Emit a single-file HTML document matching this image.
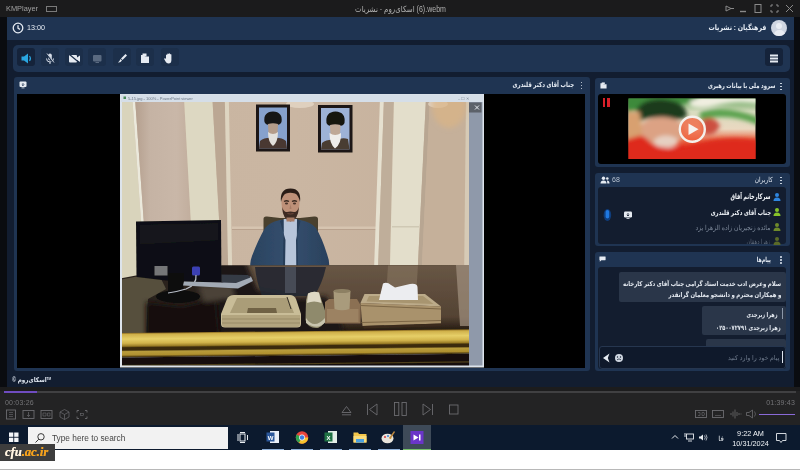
<!DOCTYPE html>
<html><head><meta charset="utf-8">
<style>
*{margin:0;padding:0;box-sizing:border-box}
html,body{width:800px;height:470px;overflow:hidden;background:#fff;font-family:"Liberation Sans","DejaVu Sans",sans-serif;}
.abs{position:absolute}
#root{position:relative;width:800px;height:470px;overflow:hidden;background:#fff}
#titlebar{left:0;top:0;width:800px;height:17px;background:#1b1b1c}
#app{left:0;top:17px;width:800px;height:370px;background:#0a0c10}
#appin{left:7px;top:0;width:787px;height:370px;background:#121d30}
#hdr{left:0;top:0;width:787px;height:23px;background:#1f3452}
#tool{left:6px;top:28px;width:777px;height:27px;background:#1f3452;border-radius:5px}
.panel{background:#1f3452;border-radius:3px}
.pt{transform-origin:right center;color:#e6ecf4;font-size:7px;font-weight:bold;direction:rtl;white-space:nowrap;text-align:right;line-height:10px}
.tb{width:18px;height:18px;border-radius:3px;background:#1c2f4a;top:3.200px}
.keb{width:2px;height:8px}
.keb i{position:absolute;left:0;width:1.800px;height:1.800px;border-radius:50%;background:#dfe6f0}
#ctrl{left:0;top:387px;width:800px;height:38px;background:#232324}
#task{left:0;top:425px;width:800px;height:25px;background:#0c1a2e}
#search{left:28px;top:427px;width:200px;height:22px;background:#f2f2f2;color:#454545;font-size:8.300px}
#cfu{left:0;top:444px;width:55px;height:16.500px;background:#3d3d3d}
.u{transform-origin:right center;direction:rtl;white-space:nowrap;text-align:right;font-size:7px;line-height:10px}
.msg{background:#2a3649;border-radius:2px}
.mt{transform-origin:right center;direction:rtl;white-space:nowrap;text-align:right;font-size:6.6px;line-height:9px;color:#e4e9f0;font-weight:bold}
</style></head><body>
<svg width="0" height="0" style="position:absolute"><defs><filter id="gblur" x="0" y="0" width="100%" height="100%" color-interpolation-filters="sRGB"><feGaussianBlur stdDeviation="0.550" edgeMode="duplicate"/></filter></defs></svg>
<div id="root" style="filter:url(#gblur)">
 <div id="titlebar" class="abs">
  <span id="t_km" class="abs" style="left:5.500px;top:3px;font-size:8px;color:#a0a0a0;line-height:11px;transform-origin:left center;transform:scaleX(0.923)">KMPlayer</span>
  <span class="abs" style="left:46px;top:5.5px;width:11px;height:6px;border:1px solid #7a7a7a"></span>
  <span id="t_title" class="abs" style="left:354.500px;top:4px;font-size:8.500px;color:#b0b0b0;white-space:nowrap;line-height:11px;direction:ltr;transform-origin:left center;transform:scaleX(0.828)">اسکای‌روم - نشریات &lrm;(6).webm</span>
  <svg class="abs" style="left:720px;top:0" width="80" height="17" viewBox="720 0 80 17" fill="none" stroke="#8a8a8a" stroke-width="1">
   <path d="M726 6 L731 8.5 L726 11 Z M731 8.5 H734"/>
   <path d="M740 11.5 H746" stroke-width="1.4"/>
   <rect x="755" y="4.5" width="6" height="8"/>
   <path d="M771 7 V5 H773 M776 5 H778 V7 M778 10 V12 H776 M773 12 H771 V10"/>
   <path d="M786 5 L793 12 M793 5 L786 12"/>
  </svg>
 </div>
 <div id="app" class="abs">
  <div id="appin" class="abs">
   <div id="hdr" class="abs">
    <svg class="abs" style="left:5px;top:5px" width="12" height="12" viewBox="0 0 12 12" fill="none" stroke="#e6ecf4" stroke-width="1.3"><circle cx="6" cy="6" r="4.8"/><path d="M6 3.2 V6.2 L8 7.4"/></svg>
    <span id="t_1300" class="abs" style="left:20px;top:6px;font-size:7.500px;color:#e6ecf4;line-height:10px;transform-origin:left center;transform:scaleX(0.958)">13:00</span>
    <div class="abs" style="left:764px;top:3px;width:16px;height:16px;border-radius:50%;background:#cfd6e2;overflow:hidden">
      <div class="abs" style="left:5px;top:3px;width:6px;height:6px;border-radius:50%;background:#e9edf3"></div>
      <div class="abs" style="left:2.5px;top:10px;width:11px;height:8px;border-radius:5px 5px 0 0;background:#e9edf3"></div>
    </div>
    <span id="t_hdr" class="abs pt" style="right:28px;top:6px;font-size:7.500px;transform:scaleX(0.835)">فرهنگیان : نشریات</span>
   </div>
   <div id="tool" class="abs">
    <div class="abs tb" style="left:4px;background:#15233a"></div>
    <div class="abs tb" style="left:28px"></div>
    <div class="abs tb" style="left:52px"></div>
    <div class="abs tb" style="left:75px"></div>
    <div class="abs tb" style="left:100px"></div>
    <div class="abs tb" style="left:123px"></div>
    <div class="abs tb" style="left:148px"></div>
    <div class="abs tb" style="left:752px;background:#15233a"></div>
    <svg class="abs" style="left:0;top:0" width="777" height="27" viewBox="0 0 777 27">
     <!-- speaker -->
     <path d="M8.5 11.5 H11 L15 8.5 V18.5 L11 15.5 H8.5Z" fill="#2aa6e0"/>
     <path d="M16.5 11 Q18.5 13.5 16.5 16" fill="none" stroke="#2aa6e0" stroke-width="1.1"/>
     <!-- mic -->
     <rect x="35.2" y="8.5" width="3.6" height="7" rx="1.8" fill="#d4dbe6"/>
     <path d="M33.5 13.5 Q33.5 17 37 17 Q40.500 17 40.500 13.500 M37 17 V19" fill="none" stroke="#d4dbe6" stroke-width="1"/>
     <path d="M33.500 9 L40.500 18" stroke="#1c2f4a" stroke-width="1.6"/><path d="M34 8.500 L41 17.500" stroke="#d4dbe6" stroke-width="0.9"/>
     <!-- cam -->
     <rect x="56" y="10" width="8" height="7.500" rx="1" fill="#e6ebf2"/><path d="M64 12.500 L67 10.500 V17 L64 15Z" fill="#e6ebf2"/>
     <path d="M56.500 9.500 L66 17.500" stroke="#1c2f4a" stroke-width="1.2"/>
     <!-- screen dim -->
     <rect x="80" y="10" width="8.500" height="6.500" rx="1" fill="#5a6a80"/><rect x="82.500" y="17" width="3.500" height="1" fill="#5a6a80"/>
     <!-- brush -->
     <path d="M112.500 9 L114 10.500 L109.500 15 L108 13.500Z" fill="#e6ebf2"/><path d="M107.500 14 L109 15.500 Q107.500 18 105 17.500 Q106.500 16.500 107.500 14Z" fill="#e6ebf2"/>
     <!-- folder -->
     <path d="M128 10 H131 L132 11.500 H136 V18 H128Z" fill="#e6ebf2"/><rect x="129.500" y="8.500" width="4" height="3" fill="#e6ebf2"/>
     <!-- hand -->
     <path d="M153 13 V10 Q153.600 9.200 154.200 10 V9 Q154.900 8.200 155.600 9 V8.700 Q156.300 7.900 157 8.700 V9.400 Q157.700 8.800 158.400 9.500 V15 Q158.400 18.500 155.500 18.500 Q153.500 18.500 152.500 16.500 L151 13.800 Q151.800 12.800 153 13.800Z" fill="#e6ebf2"/>
     <!-- hamburger -->
     <path d="M757 10.500 H765 M757 13.500 H765 M757 16.500 H765" stroke="#e6ebf2" stroke-width="1.800"/>
    </svg>
   </div>
   <!-- main panel -->
   <div class="abs panel" style="left:7px;top:60px;width:576px;height:294px">
     <div class="abs" style="left:3px;top:17px;width:568px;height:274px;background:#000"></div>
     <div id="t_main" class="abs pt" style="right:15.500px;top:3px;transform:scaleX(0.778)">جناب آقای دکتر قلندری</div>
     <div class="abs keb" style="left:566.5px;top:4.5px"><i style="top:0"></i><i style="top:3px"></i><i style="top:6px"></i></div>
     <svg class="abs" style="left:5px;top:4px" width="8" height="8" viewBox="0 0 8 8"><rect x="0.500" y="0.500" width="7" height="5.500" rx="1" fill="#e6ebf2"/><path d="M4 2 V4.500 M2.800 3.500 L4 4.700 L5.200 3.500" stroke="#1f3452" stroke-width="0.800" fill="none"/><rect x="2.500" y="6.500" width="3" height="0.800" fill="#e6ebf2"/></svg>
   </div>
   <span id="t_foot" class="abs" style="left:5px;top:357.500px;transform-origin:left center;font-size:6.500px;color:#dfe6f0;font-weight:bold;white-space:nowrap;line-height:9px;transform:scaleX(0.866)">© اسکای‌روم<sup style="font-size:3.500px;vertical-align:top">TM</sup></span>
   <!-- right panel 1 -->
   <div class="abs panel" style="left:587.500px;top:61px;width:195px;height:89px"></div>
   <div class="abs" style="left:590px;top:61px;width:191px;height:88px">
     <div class="abs" style="left:0.500px;top:16px;width:188.500px;height:70px;background:#000;border-radius:3px"></div>
     <div id="t_p1" class="abs pt" style="right:13px;top:3px;transform:scaleX(0.755)">سرود ملی با بیانات رهبری</div>
     <div class="abs keb" style="left:183px;top:4.500px"><i style="top:0"></i><i style="top:3px"></i><i style="top:6px"></i></div>
     <svg class="abs" style="left:2.500px;top:4px" width="7" height="7" viewBox="0 0 8 8"><path d="M0.500 1.500 H3 L4 2.500 H7.500 V7.500 H0.500Z" fill="#e6ebf2"/><rect x="2" y="0.500" width="3.500" height="2" fill="#e6ebf2"/></svg>
     <div class="abs" style="left:5.500px;top:20px;width:2.800px;height:8.500px;background:#d8202a"></div>
     <div class="abs" style="left:10.200px;top:20px;width:2.800px;height:8.500px;background:#d8202a"></div>
   </div>
   <!-- users panel -->
   <div class="abs panel" style="left:587.500px;top:156px;width:195px;height:73px"></div>
   <div class="abs" style="left:590px;top:156px;width:191px;height:73px">
     <div class="abs" style="left:0.500px;top:14px;width:188.500px;height:57px;background:#131d2f;border-radius:3px"></div>
     <div id="t_users" class="abs pt" style="right:15.500px;top:2px;font-weight:normal;transform:scaleX(0.828)">کاربران</div>
     <div class="abs keb" style="left:183px;top:3.500px"><i style="top:0"></i><i style="top:3px"></i><i style="top:6px"></i></div>
     <svg class="abs" style="left:3px;top:3px" width="10" height="8" viewBox="0 0 10 8" fill="#e6ebf2"><circle cx="3.500" cy="2.200" r="1.700"/><path d="M0.500 7.500 Q0.500 4.500 3.500 4.500 Q6.500 4.500 6.500 7.500Z"/><circle cx="7.300" cy="2.500" r="1.300"/><path d="M7 4.500 Q9.500 4.500 9.500 7.500 H7.300Z"/></svg>
     <span class="abs" style="left:15px;top:2px;font-size:7px;color:#b8c2d0;line-height:10px">68</span>
     <!-- rows -->
     <div id="t_u1" class="abs u" style="right:17.400px;top:19px;color:#f2f5f9;font-weight:bold;font-size:7.500px;transform:scaleX(0.672)">سرکارخانم آفاق</div>
     <div id="t_u2" class="abs u" style="right:17.400px;top:34.500px;color:#eef2f7;font-weight:bold;transform:scaleX(0.764)">جناب آقای دکتر قلندری</div>
     <div id="t_u3" class="abs u" style="right:17.400px;top:49.500px;color:#7f8b9c;transform:scaleX(0.867)">مائده زنجیریان زاده الزهرا یزد</div>
     <div id="t_u4" class="abs u" style="right:17.400px;top:64px;color:#5f6b7c;height:7px;overflow:hidden;transform:scaleX(0.740)">زهرا دهقان</div>
     <svg class="abs" style="left:0;top:0" width="191" height="73" viewBox="0 0 191 73">
      <g fill="#2f86e0"><circle cx="180" cy="22" r="2"/><path d="M176.500 28 Q176.500 24.500 180 24.500 Q183.500 24.500 183.500 28Z"/></g>
      <g fill="#86c22a"><circle cx="180" cy="37" r="2"/><path d="M176.500 43 Q176.500 39.500 180 39.500 Q183.500 39.500 183.500 43Z"/></g>
      <g fill="#6f8a2a"><circle cx="180" cy="52" r="2"/><path d="M176.500 58 Q176.500 54.500 180 54.500 Q183.500 54.500 183.500 58Z"/></g>
      <g fill="#5a6a28"><circle cx="180" cy="66" r="2"/><path d="M176.500 72 Q176.500 68.500 180 68.500 Q183.500 68.500 183.500 72Z"/></g>
      <ellipse cx="10.400" cy="42" rx="3.800" ry="6" fill="#0f3d7c"/><rect x="8.600" y="37" width="3.600" height="8.500" rx="1.800" fill="#1f78e0"/>
      <rect x="27" y="38.500" width="8" height="6" rx="1.200" fill="#e6ebf2"/><rect x="29.500" y="45" width="3" height="0.800" fill="#e6ebf2"/><path d="M31 40 V43 M29.800 41.800 L31 43 L32.200 41.800" stroke="#131c2d" stroke-width="0.800" fill="none"/>
     </svg>
   </div>
   <!-- messages panel -->
   <div class="abs panel" style="left:587.500px;top:235px;width:195px;height:119px"></div>
   <div class="abs" style="left:590px;top:235px;width:191px;height:119px">
     <div class="abs" style="left:0.500px;top:15px;width:188.500px;height:102px;background:#131d2f;border-radius:3px"></div>
     <div class="abs" style="left:2px;top:15px;width:187px;height:102px;overflow:hidden">
       <div class="abs msg" style="left:20px;top:5px;width:167px;height:30px"></div>
       <div class="abs msg" style="left:103px;top:39px;width:84px;height:29px"></div>
       <div class="abs msg" style="left:107px;top:72px;width:80px;height:10px"></div>
       <div class="abs" style="left:0;top:79px;width:187px;height:23px;background:#0f192b;border:1px solid #26364f;border-radius:3px"></div>
       <div id="t_m1" class="abs mt" style="right:5px;top:12px;transform:scaleX(0.814)">سلام وعرض ادب خدمت استاد گرامی جناب آقای دکتر کارخانه</div>
       <div id="t_m2" class="abs mt" style="right:5px;top:22.500px;transform:scaleX(0.816)">و همکاران محترم و دانشجو معلمان گرانقدر</div>
       <div class="abs" style="left:183px;top:41px;width:1.200px;height:11px;background:#8a96a8"></div>
       <div id="t_m3" class="abs mt" style="right:8px;top:43px;transform:scaleX(0.746)">زهرا زبرجدی</div>
       <div id="t_m4" class="abs mt" style="right:5px;top:56px;transform:scaleX(0.772)">زهرا زبرجدی ۰۲۵۰۰۷۲۷۹۱</div>
       <div id="t_ph" class="abs mt" style="right:7px;top:86px;font-weight:normal;color:#6f7b8d;transform:scaleX(0.947)">پیام خود را وارد کنید</div>
       <div class="abs" style="left:182.500px;top:84px;width:1px;height:12px;background:#dfe6f0"></div>
       <svg class="abs" style="left:2px;top:85px" width="24" height="12" viewBox="0 0 24 12"><path d="M8.500 1.500 L2 6 L8.500 10.500 L6.800 6Z" fill="#e6ebf2"/><circle cx="18" cy="6" r="4" fill="#cfd6e0"/><circle cx="16.500" cy="5" r="0.700" fill="#111c2f"/><circle cx="19.500" cy="5" r="0.700" fill="#111c2f"/><path d="M16 7.800 Q18 6 20 7.800" stroke="#111c2f" stroke-width="0.700" fill="none"/></svg>
     </div>
     <div id="t_msgs" class="abs pt" style="right:17px;top:2.500px;transform:scaleX(0.675)">پیام‌ها</div>
     <div class="abs keb" style="left:183px;top:4px"><i style="top:0"></i><i style="top:3px"></i><i style="top:6px"></i></div>
     <svg class="abs" style="left:2.400px;top:4px" width="7" height="6.200" viewBox="0 0 9 8"><path d="M1 0.500 H8 Q8.500 0.500 8.500 1 V5 Q8.500 5.500 8 5.500 H3 L1 7.500 V5.500 Q0.500 5.500 0.500 5 V1 Q0.500 0.500 1 0.500Z" fill="#e6ebf2"/></svg>
   </div>
  </div>
 </div>
<svg class="abs" style="left:0;top:0" width="800" height="470" viewBox="0 0 800 470">
 <defs>
  <filter id="bl" x="-5%" y="-5%" width="110%" height="110%"><feGaussianBlur stdDeviation="0.6"/></filter>
  <filter id="bl2" x="-20%" y="-20%" width="140%" height="140%"><feGaussianBlur stdDeviation="2.500"/></filter>
  <linearGradient id="gold" x1="0" y1="0" x2="0" y2="1">
   <stop offset="0" stop-color="#8a6a20"/><stop offset="0.060" stop-color="#cfb04a"/><stop offset="0.250" stop-color="#e6cf68"/>
   <stop offset="0.420" stop-color="#d2b44c"/><stop offset="0.540" stop-color="#9a7c26"/><stop offset="0.600" stop-color="#3a2a0c"/><stop offset="0.700" stop-color="#3a2a0c"/>
   <stop offset="0.760" stop-color="#b89c3c"/><stop offset="0.900" stop-color="#b0902f"/><stop offset="1" stop-color="#2a1c08"/>
  </linearGradient>
  <linearGradient id="wallL" x1="0" y1="0" x2="1" y2="0">
   <stop offset="0" stop-color="#b49f8e"/><stop offset="0.250" stop-color="#c5b3a4"/><stop offset="0.700" stop-color="#c9b7a8"/><stop offset="1" stop-color="#c0ac9b"/>
  </linearGradient>
  <linearGradient id="wallC" x1="0" y1="0" x2="1" y2="0">
   <stop offset="0" stop-color="#c9b5a1"/><stop offset="0.500" stop-color="#cab6a2"/><stop offset="1" stop-color="#c6b19c"/>
  </linearGradient>
  <linearGradient id="deskR" x1="0" y1="0" x2="0" y2="1">
   <stop offset="0" stop-color="#685645"/><stop offset="0.750" stop-color="#544333"/><stop offset="0.920" stop-color="#2c2016"/><stop offset="1" stop-color="#20160e"/>
  </linearGradient>
  <linearGradient id="deskFade" x1="0" y1="0" x2="1" y2="0">
   <stop offset="0" stop-color="#1d1713" stop-opacity="1"/><stop offset="1" stop-color="#1d1713" stop-opacity="0"/>
  </linearGradient>
  <linearGradient id="suit" x1="0" y1="0" x2="1" y2="0">
   <stop offset="0" stop-color="#2a425f"/><stop offset="0.500" stop-color="#34506f"/><stop offset="1" stop-color="#2a405c"/>
  </linearGradient>
  <clipPath id="dc"><polygon points="118,279 136,275.500 222,265.500 473,265 473,336 118,338"/></clipPath>
  <clipPath id="pc"><rect x="122" y="102" width="347" height="263.500"/></clipPath>
 </defs>
 <!-- window chrome -->
 <rect x="120" y="94" width="364" height="273.500" fill="#dde4ec"/>
 <rect x="121" y="94.500" width="362" height="7.500" fill="#d5dee8"/>
 <rect x="123.500" y="96.500" width="2.500" height="2.500" fill="#4a8a5a"/>
 <text x="128" y="100" font-size="4" fill="#6a7684" font-family="Liberation Sans, sans-serif">5-15.jpg - ‪100%‬ - PowerPoint viewer</text>
 <text x="458" y="100" font-size="4" fill="#7a8694" font-family="Liberation Sans, sans-serif">– ☐ ✕</text>
 <rect x="469" y="102" width="13.500" height="263.500" fill="#8f99aa"/>
 <rect x="469" y="102.500" width="12.500" height="10" fill="#5c6169"/>
 <path d="M475 105.500 L479 109.500 M479 105.500 L475 109.500" stroke="#e8ecf0" stroke-width="1"/>
 <g clip-path="url(#pc)">
 <g filter="url(#bl)">
  <!-- wall -->
  <rect x="118" y="98" width="355" height="180" fill="url(#wallC)"/>
  <polygon points="118,98 132.300,98 145.600,285 118,285" fill="#d9d4bc"/>
  <polygon points="132.300,98 135,98 148.300,285 145.600,285" fill="#ebe9dc"/>
  <polygon points="135,98 184,98 194.300,285 148.300,285" fill="url(#wallL)"/>
  <polygon points="184,98 212.400,98 222.700,285 194.300,285" fill="#ddd8c2"/>
  <polygon points="212.400,98 224.800,98 228.500,285 222.700,285" fill="#bba793"/>
  <polygon points="224.800,98 228.800,98 232.500,285 228.500,285" fill="#ded5c1"/>
  <rect x="232" y="226.500" width="146" height="2.500" fill="#d6c4b0"/>
  <rect x="232" y="229" width="146" height="1" fill="#b9a28e"/>
  <!-- right column -->
  <polygon points="380,98 384,98 377.500,285 373.500,285" fill="#e6e1d0"/>
  <polygon points="384,98 394,98 389.500,285 377.500,285" fill="#bfae9a"/>
  <polygon points="394,98 426,98 417,285 389.500,285" fill="#e3decb"/>
  <polygon points="426,98 430,98 421,285 417,285" fill="#b8a692"/>
  <polygon points="430,98 473,98 473,285 421,285" fill="#c5b09a"/>
  <polygon points="466,98 473,98 473,285 464,285" fill="#d6cab6"/>
  <rect x="392" y="226" width="27" height="1.500" fill="#cfc8b4"/>
  <ellipse cx="300" cy="104" rx="14" ry="4" fill="#e8dccb" opacity="0.700"/>
  <ellipse cx="438" cy="104" rx="10" ry="4" fill="#e8dccb" opacity="0.700"/>
  <g filter="url(#bl2)"><ellipse cx="449" cy="106" rx="17" ry="22" fill="#dcb484" opacity="0.650"/></g>
  <!-- portraits -->
  <rect x="256" y="104.500" width="34" height="47" fill="#1a1612"/>
  <rect x="259" y="107.500" width="28" height="41" fill="#86a1cd"/>
  <path d="M259 148.500 L260 141 Q265 137 273 138 Q281 137 286 141 L287 148.500Z" fill="#4a3830"/>
  <path d="M264.500 122 Q263 112 273 111.500 Q283 112 281.500 122 Q280 126 273 124.500 Q266 126 264.500 122Z" fill="#191715"/>
  <path d="M268 124 Q273 122.500 278 124 L277.500 134 Q273 139 268.500 134Z" fill="#b49c8a"/>
  <path d="M268 132 Q273 136 278 132 Q278 142 273 146 Q268 142 268 132Z" fill="#e2e0dc"/>
  <rect x="318" y="105" width="34.500" height="47.500" fill="#1a1612"/>
  <rect x="321" y="108" width="28.500" height="41.500" fill="#9db2d6"/>
  <path d="M321 149.500 L322 143 Q327 139 335 140 Q343 137 348 139 L349.500 149.500Z" fill="#4a3c30"/>
  <path d="M326.500 123 Q325 112 335.500 111.500 Q346 112 344.500 123 Q343 127 335.500 125.500 Q328 127 326.500 123Z" fill="#141210"/>
  <path d="M330 125 Q335 123.500 340.500 125 L340 135 Q335 140 330.500 135Z" fill="#bfa896"/>
  <path d="M329.500 133 Q335 137 341 133 Q341.500 144 335 148.500 Q329.500 144 329.500 133Z" fill="#efedea"/>
  <!-- chair -->
  <path d="M263.500 268 V219 Q263.500 216 267 216.500 L280 218 H300 L314 216.500 Q318 216 318 219 V268Z" fill="#4a402e"/>
  <!-- suit -->
  <path d="M280 220 Q270 222 265 228 Q258 240 252 256 Q249 264 251 268 H329 Q330 262 327 254 Q322 238 316 228 Q311 222 300 220Z" fill="url(#suit)"/>
  <polygon points="283.500,219 297,219 296.500,268 284.500,268" fill="#b7c5da"/>
  <path d="M283.500 219 L280 221 L285.500 240 L285 268 L283 268Z" fill="#263c58"/>
  <path d="M297 219 L300.500 221 L296 240 L296.500 268 L298 268Z" fill="#263c58"/>
  <!-- head -->
  <path d="M281.500 203 Q281 190 290.500 190 Q300 190 299.500 203 Q299 214 295 218.500 Q290.500 222 286 218.500 Q282 214 281.500 203Z" fill="#bd9078"/>
  <path d="M281 202 Q279.500 188.500 290.500 188.500 Q301.500 188.500 300 202 Q298.500 195 295 193.500 Q290 192 286 193.500 Q282.500 195 281 202Z" fill="#2a1f19"/>
  <path d="M282 207 Q283 220 290.500 221.500 Q298 220 299 207 Q297 212.500 294 212 Q290.500 211 287 212 Q284 212.500 282 207Z" fill="#3c2c24"/>
  <rect x="286.500" y="217.500" width="8" height="4" fill="#a87c66"/>
  <path d="M284 201.500 Q286.500 200 289 201.500 M292 201.500 Q294.500 200 297 201.500" stroke="#3a2a22" stroke-width="1.300" fill="none"/>
  <ellipse cx="286.500" cy="203.500" rx="1.600" ry="0.900" fill="#4a342a"/><ellipse cx="294.500" cy="203.500" rx="1.600" ry="0.900" fill="#4a342a"/>
  <path d="M290.500 204 L289.500 209 H291.500Z" fill="#a67c66"/>
  <path d="M287.500 213.500 Q290.500 214.500 293.500 213.500" stroke="#7a4a40" stroke-width="0.800" fill="none"/>
  <!-- desk -->
  <polygon points="118,279 136,275.500 222,265.500 473,265 473,336 118,338" fill="#2a231d"/>
  <polygon points="232,265.500 473,265 473,334 232,334" fill="url(#deskR)"/>
  <g clip-path="url(#dc)"><g filter="url(#bl2)"><polygon points="215,255 243,255 258,290 300,298 326,296 340,318 346,345 215,345" fill="#1f1915"/></g></g>
  <polygon points="388,265.500 418,265.500 414,326 384,326" fill="#8a7862" opacity="0.550"/>
  <polygon points="456,265 473,265 473,326 460,326" fill="#a39280" opacity="0.700"/>
  <polygon points="118,280 158,272.500 166,289 148,299 146,338 118,338" fill="#58523f" opacity="0.950"/>
  <g clip-path="url(#dc)"><g filter="url(#bl2)"><polygon points="146,302 182,306 216,298 219,336 146,338" fill="#120f0c"/><polygon points="198,286 232,284 236,298 204,302" fill="#4c4238"/></g></g>
  <path d="M255 267 H326 Q322 285 314 296 H262 Q256 280 255 267Z" fill="#242831" opacity="0.900"/>
  <rect x="285" y="267" width="11" height="26" fill="#5a6270" opacity="0.600"/>
  <!-- monitor -->
  <polygon points="136,221.500 221,220 221.500,282.500 170,281 136.500,277" fill="#101113"/>
  <polygon points="140,225 218,223.500 218,240 140,244" fill="#17181b"/>
  <rect x="154.500" y="266" width="13" height="9.500" fill="#8e9092" opacity="0.800"/>
  <rect x="192" y="266.500" width="8" height="9" rx="1.500" fill="#3a40b4"/>
  <rect x="168" y="273" width="15.500" height="20" fill="#0d0d0f"/>
  <ellipse cx="178" cy="296.500" rx="22" ry="6.500" fill="#0b0b0c"/>
  <path d="M196 275 Q197 285 186 289 Q176 292 168 293" fill="none" stroke="#b9bec8" stroke-width="1.200"/>
  <!-- keyboard -->
  <polygon points="184,281.500 221.500,282.500 251,276.500 253,281 238,288.500 183,285.500" fill="#a2aab5"/>
  <polygon points="221.500,274.500 248,275 250.500,277.500 236,283 221.500,282.500" fill="#353a45"/>
  <!-- tray -->
  <path d="M234 295 H290 Q294 295 296 299 L301 314 V324 Q301 327.500 297 327.500 H225 Q221 327.500 221 324 V314 L227 299 Q229 295 234 295Z" fill="#c9bd98"/>
  <path d="M222 315 H300 V324 Q300 327 297 327 H225 Q222 327 222 324Z" fill="#b3a57f"/>
  <path d="M222 319 H300 M222 323 H300" stroke="#8f8260" stroke-width="0.700"/>
  <path d="M237 298 H288 L294 313 H230Z" fill="#aa9d78"/>
  <polygon points="248,308 276,308 277,313 247,313" fill="#6f6244"/>
  <path d="M287 297 L291 309" stroke="#3a342a" stroke-width="1"/>
  <!-- boat -->
  <path d="M308 293.500 Q313 290.500 319 292.500 L325.500 312 Q327 324 318 328 Q308 329 305.500 320 L306 300Z" fill="#8f8a6c"/>
  <path d="M308 293.500 Q313 290.500 319 292.500 L321.500 303 Q314 300 307 303Z" fill="#ded8c4"/>
  <path d="M306 318 Q314 330 325 318 L325.500 322 Q318 331 306 323Z" fill="#c8c4ae"/>
  <!-- pen holder -->
  <polygon points="325,302 329,299 357,299 360.500,305 360.500,323.500 325,323.500" fill="#8b6f52"/>
  <polygon points="327,309 358.500,309 358.500,322 327,322" fill="#9c8262"/>
  <path d="M333.500 291 Q342 288 350.500 291 L349.500 309 Q342 311.500 334.500 309Z" fill="#a99b7c"/>
  <ellipse cx="342" cy="291" rx="8.500" ry="2" fill="#8d8064"/>
  <!-- tissue box -->
  <polygon points="364.500,294 425,294 441,306.500 360.500,303" fill="#bcab8a"/>
  <polygon points="369,296 423,296 433.500,304 366.500,301.500" fill="#a8956f"/>
  <polygon points="360.500,303 441,306.500 441,323.500 362.500,326" fill="#a9926c"/>
  <path d="M360.500 305.500 L441 309 M361.500 322.500 L441 320.500" stroke="#7c6646" stroke-width="1"/>
  <polygon points="362.500,326 441,323.500 441,326 364,328.500" fill="#3a2c1e"/>
  <path d="M379 300 L383 283.500 Q387 281.500 391 285 L395 287.500 L410 284 Q417 283 417.500 287 L418 300Z" fill="#ecedf0"/>
  <!-- gold band -->
  <g transform="rotate(-0.600 122 333)">
   <rect x="116" y="333" width="362" height="24.500" fill="url(#gold)"/>
   <rect x="116" y="357.500" width="362" height="14" fill="#16100a"/>
   <rect x="116" y="365" width="362" height="1.200" fill="#6a5424" opacity="0.700"/>
  </g>
 </g>
 </g>
</svg>
<svg class="abs" style="left:0;top:0" width="800" height="470" viewBox="0 0 800 470">
 <defs>
  <filter id="tb1" x="-10%" y="-10%" width="120%" height="120%"><feGaussianBlur stdDeviation="2.200"/></filter>
  <clipPath id="tc"><rect x="628.500" y="98.500" width="127" height="60.500"/></clipPath>
  <linearGradient id="flag" x1="0" y1="0" x2="0" y2="1">
   <stop offset="0" stop-color="#4f9a46"/><stop offset="0.220" stop-color="#d8dcc0"/><stop offset="0.500" stop-color="#ead8c0"/>
   <stop offset="0.680" stop-color="#e86a48"/><stop offset="0.820" stop-color="#e02818"/><stop offset="1" stop-color="#d42014"/>
  </linearGradient>
 </defs>
 <g clip-path="url(#tc)">
  <rect x="628" y="98" width="128" height="62" fill="url(#flag)"/>
  <g filter="url(#tb1)">
   <path d="M690 96 H760 V104 Q735 100 715 106 Q700 110 690 106Z" fill="#f0eee0"/>
   <path d="M700 112 Q725 104 760 118 V126 Q730 112 700 120Z" fill="#5aa24e"/>
   <path d="M625 96 H700 Q690 104 660 106 L625 112Z" fill="#3c8a3a"/>
   <path d="M636 118 Q634 100 660 99 Q686 100 687 116 Q680 122 662 118 Q645 116 636 124Z" fill="#1f3a1c"/>
   <ellipse cx="662" cy="131" rx="23" ry="14" fill="#dca284"/>
   <ellipse cx="666" cy="142" rx="12" ry="6.500" fill="#e8d8cc" opacity="0.850"/>
   <path d="M625 138 Q640 130 650 142 Q660 152 690 146 Q720 134 760 140 V162 H625Z" fill="#de2a1a"/>
   <path d="M702 120 Q714 114 720 126 Q714 138 703 134Z" fill="#cc5040"/>
   <path d="M625 112 L640 112 L642 135 L625 140Z" fill="#d8a070"/>
  </g>
  <circle cx="692.300" cy="129.300" r="12.500" fill="#f0603c" opacity="0.750"/>
  <circle cx="692.300" cy="129.300" r="12.500" fill="none" stroke="#f4f0ec" stroke-width="2.400"/>
  <path d="M688.500 123.500 L698.500 129.300 L688.500 135.100Z" fill="#f6f2ee"/>
 </g>
</svg>
 <div id="ctrl" class="abs">
   <div class="abs" style="left:0;top:0;width:800px;height:4px;background:#1c1c1d"></div><div class="abs" style="left:4px;top:4px;width:792px;height:2px;background:#404042"></div>
   <div class="abs" style="left:4px;top:4px;width:33px;height:2px;background:#6f4cc0"></div>
   <span class="abs" style="left:5px;top:10.500px;font-size:7px;color:#747477;line-height:9px;letter-spacing:0.200px">00:03:26</span>
   <span class="abs" style="right:5px;top:10.500px;font-size:7px;color:#747477;line-height:9px;letter-spacing:0.200px">01:39:43</span>
   <div class="abs" style="left:759px;top:26.500px;width:36px;height:1.500px;background:#8a6ad8"></div>
   <svg class="abs" style="left:0;top:0" width="800" height="38" viewBox="0 0 800 38" fill="none" stroke="#6c6c70" stroke-width="0.900">
     <rect x="6.500" y="23" width="9" height="9"/><path d="M9 25.500 H13 M9 27.500 H13 M9 29.500 H13" stroke-width="0.600"/>
     <rect x="23" y="23.500" width="11" height="8"/><path d="M28.500 25 V29.500 M27 28 L28.500 29.500 L30 28" stroke-width="0.700"/>
     <rect x="41" y="23.500" width="11" height="8"/><path d="M43 26 H46 V29 H43Z M47.500 26 H50 V29 H47.500Z" stroke-width="0.600"/>
     <path d="M64.500 22.500 L69 25 V30 L64.500 32.500 L60 30 V25Z M60 25 L64.500 27.500 L69 25 M64.500 27.500 V32.500" stroke-width="0.700"/>
     <path d="M77 25.500 V23.500 H79 M85 23.500 H87 V25.500 M87 29.500 V31.500 H85 M79 31.500 H77 V29.500"/><rect x="80.500" y="26.500" width="3" height="2" stroke-width="0.600"/>
     <path d="M342 25.500 L346.500 19.500 L351 25.500Z M342 27.800 H351" stroke-width="0.900"/>
     <path d="M367.500 17 V28 M369.500 22.500 L377 17 V28Z" stroke-width="0.900"/>
     <rect x="394.500" y="15.500" width="4.300" height="13" stroke-width="0.900"/><rect x="402" y="15.500" width="4.300" height="13" stroke-width="0.900"/>
     <path d="M432.500 17 V28 M430.500 22.500 L423 17 V28Z" stroke-width="0.900"/>
     <rect x="449.500" y="18" width="8.500" height="9" stroke-width="0.900"/>
     <rect x="695.500" y="23.500" width="11" height="7"/><path d="M698 25.500 H700 V28.500 H698 M702 25.500 H704 Q705 27 704 28.500 H702Z" stroke-width="0.600"/>
     <rect x="712.500" y="23.500" width="11" height="7"/><path d="M715 28.500 H721" stroke-width="0.600"/>
     <path d="M731 26 V28 M733 24.500 V29.500 M735 22.500 V31.500 M737 25 V29 M739 26 V28 M741 26.500 V27.500" stroke-width="0.800"/>
     <path d="M746.500 25.500 H749 L752.500 23 V31 L749 28.500 H746.500Z" stroke-width="0.800"/><path d="M754.500 24.500 Q756.500 27 754.500 29.500" stroke-width="0.700"/>
   </svg>
 </div>
 <div id="task" class="abs">
   <div class="abs" style="left:403px;top:0;width:28px;height:25px;background:#3e4a58"></div>
   <div class="abs" style="left:403px;top:23.500px;width:28px;height:1.500px;background:#76c06a"></div>
   <div class="abs" style="left:262px;top:24px;width:22px;height:1px;background:#8fb0d8"></div>
   <div class="abs" style="left:291px;top:24px;width:22px;height:1px;background:#8fb0d8"></div>
   <div class="abs" style="left:320px;top:24px;width:22px;height:1px;background:#8fb0d8"></div>
   <div class="abs" style="left:349px;top:24px;width:22px;height:1px;background:#8fb0d8"></div>
   <div class="abs" style="left:378px;top:24px;width:22px;height:1px;background:#8fb0d8"></div>
   <svg class="abs" style="left:0;top:0" width="800" height="25" viewBox="0 0 800 25">
     <g fill="#f4f6f8"><rect x="9" y="7.500" width="4.300" height="4.300"/><rect x="14.200" y="7.500" width="4.300" height="4.300"/><rect x="9" y="12.700" width="4.300" height="4.300"/><rect x="14.200" y="12.700" width="4.300" height="4.300"/></g>
     <!-- task view -->
     <g fill="none" stroke="#e8ecf0" stroke-width="1"><rect x="240" y="9" width="5" height="7"/><path d="M238 9 V16 M247.500 10 V15 M240 7.500 H245 M240 17.500 H245"/></g>
     <!-- word -->
     <rect x="270" y="6" width="9" height="12" fill="#e9eef6"/><rect x="266.500" y="7.500" width="8" height="9" fill="#2b579a"/><text x="270.500" y="14.500" font-size="6" font-weight="bold" fill="#fff" text-anchor="middle" font-family="Liberation Sans, sans-serif">W</text>
     <!-- chrome -->
     <circle cx="302" cy="12.500" r="6.200" fill="#e8453c"/><path d="M302 12.500 L296.600 9.400 A6.200 6.200 0 0 0 299 17.900Z" fill="#2ea44f"/><path d="M302 12.500 L299 17.900 A6.200 6.200 0 0 0 308.200 12.500Z" fill="#f6c32c"/><circle cx="302" cy="12.500" r="2.900" fill="#f0f4f8"/><circle cx="302" cy="12.500" r="2.200" fill="#3f7fe0"/>
     <!-- excel -->
     <rect x="328" y="6" width="9" height="12" fill="#e4efe8"/><rect x="324.500" y="7.500" width="8" height="9" fill="#1f7244"/><text x="328.500" y="14.500" font-size="6" font-weight="bold" fill="#fff" text-anchor="middle" font-family="Liberation Sans, sans-serif">X</text>
     <!-- explorer -->
     <path d="M353.500 7.500 H358 L359 9 H366.500 V17.500 H353.500Z" fill="#f3c64a"/><rect x="353.500" y="11" width="13" height="6.500" fill="#f9dc7c"/><rect x="356" y="14" width="8" height="3.500" fill="#4aa0e0"/>
     <!-- paint -->
     <ellipse cx="387.500" cy="13.500" rx="6" ry="4.800" fill="#e8e4dc"/><circle cx="385" cy="12" r="1" fill="#d83a3a"/><circle cx="388" cy="11" r="1" fill="#3a8ad8"/><circle cx="390.500" cy="13" r="1" fill="#f0c030"/><path d="M389 13 L394 6 L395 7 L390.500 14Z" fill="#c08a40"/>
     <!-- kmp -->
     <rect x="410.500" y="6" width="13" height="13" fill="#6a35c8"/><path d="M413.500 9.500 L418.500 12.500 L413.500 15.500Z M419 9.500 H420.500 V15.500 H419Z" fill="#fff"/>
     <!-- tray -->
     <path d="M672 13.500 L675 10.500 L678 13.500" fill="none" stroke="#e8ecf0" stroke-width="1"/>
     <g fill="none" stroke="#e8ecf0" stroke-width="0.900"><rect x="686.500" y="9" width="7" height="5"/><path d="M685 8 V12 M688 16 H692"/></g>
     <path d="M699 11.500 H700.500 L703 9.500 V15.500 L700.500 13.500 H699Z" fill="#e8ecf0"/><path d="M704.500 10.500 Q706 12.500 704.500 14.500 M706 9.500 Q708 12.500 706 15.500" fill="none" stroke="#e8ecf0" stroke-width="0.700"/>
     <text x="721" y="15.500" font-size="7" fill="#e8ecf0" text-anchor="middle" font-family="Liberation Sans, DejaVu Sans, sans-serif">فا</text>
     <text x="750.500" y="10.500" font-size="7.300" fill="#f0f3f6" text-anchor="middle" font-family="Liberation Sans, sans-serif">9:22 AM</text>
     <text x="750.500" y="20.500" font-size="7.300" fill="#f0f3f6" text-anchor="middle" font-family="Liberation Sans, sans-serif">10/31/2024</text>
     <path d="M776.500 8.500 H786 V15.500 H782.500 L781 17.500 L779.500 15.500 H776.500Z" fill="none" stroke="#e8ecf0" stroke-width="0.900"/>
   </svg>
 </div>
 <div id="search" class="abs">
   <svg class="abs" style="left:6px;top:5px" width="12" height="12" viewBox="0 0 12 12" fill="none" stroke="#3a3a3a" stroke-width="1"><circle cx="7" cy="4.800" r="3.200"/><path d="M4.800 7.200 L1.500 10.500"/></svg>
   <span class="abs" style="left:24px;top:5.500px;line-height:11px">Type here to search</span>
 </div>
 <div id="cfu" class="abs"><span id="t_cfu" class="abs" style="left:5px;top:1.500px;font-family:'Liberation Serif','DejaVu Serif',serif;font-style:italic;font-weight:bold;font-size:11.500px;line-height:13px;color:#fff3e0;white-space:nowrap;transform-origin:left center;text-shadow:0.300px 0 0 #fff3e0;transform:scaleX(1.085)">cfu<span style="color:#f5a21e;text-shadow:0.300px 0 0 #f5a21e">.ac.ir</span></span></div>
 <div class="abs" style="left:0;top:468.500px;width:800px;height:1.500px;background:#b8b8b8"></div>
</div>
</body></html>
